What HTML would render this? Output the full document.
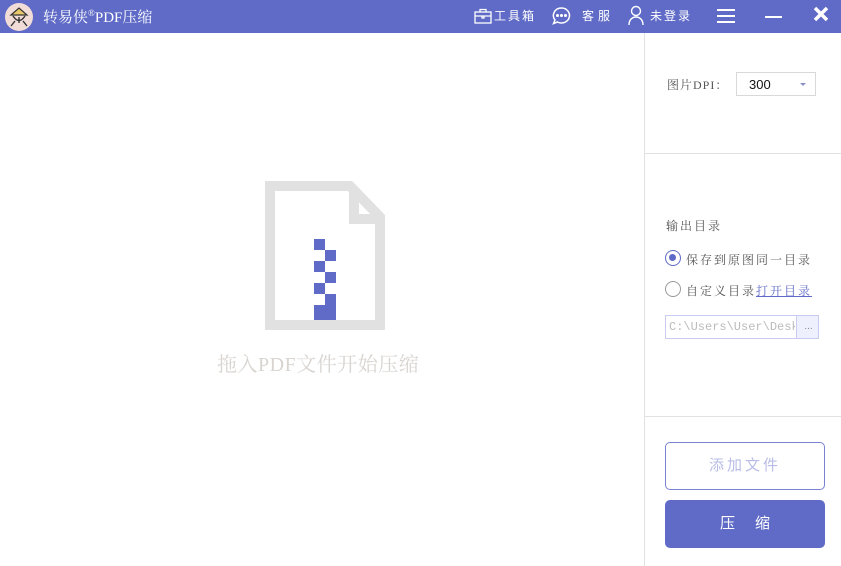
<!DOCTYPE html>
<html><head><meta charset="utf-8"><style>
*{margin:0;padding:0;box-sizing:border-box}
body{width:841px;height:566px;overflow:hidden;background:#fff;font-family:"Liberation Sans","Noto Sans CJK SC",sans-serif;position:relative}
.top{position:absolute;left:0;top:0;width:841px;height:33px;background:#5f6bc6;color:#fff}
.abs{position:absolute}
.t{font-family:"Liberation Serif","Noto Serif CJK SC",serif}
.side{position:absolute;left:644px;top:33px;width:1px;height:533px;background:#e2e2e2}
.hr{position:absolute;left:645px;width:196px;height:1px;background:#e2e2e2}
.lbl{font-size:12px;color:#555;letter-spacing:2px;font-family:"Liberation Serif","Noto Serif CJK SC",serif}
</style></head><body>
<div class="top">
  <div class="abs" style="left:5px;top:3px;width:28px;height:28px;border-radius:50%;background:#f2dcd8;overflow:hidden">
    <svg width="28" height="28" viewBox="0 0 28 28"><path d="M6 12 L14 5 L22 12 Z" fill="#e8c86a" stroke="#333" stroke-width="1.2"/><path d="M8 13 Q14 22 20 13 M10 18 L6 23 M18 18 L22 23 M14 14 L14 20" stroke="#333" stroke-width="1.4" fill="none"/></svg>
  </div>
  <div class="abs t" style="left:43px;top:6px;font-size:15px">转易侠<sup style="font-size:9px">®</sup>PDF压缩</div>
  <svg class="abs" style="left:474px;top:8px" width="18" height="17" viewBox="0 0 18 17" fill="none" stroke="#fff" stroke-width="1.3"><rect x="1" y="4" width="16" height="11"/><path d="M6 4V1.5h6V4M1 8h16M8 8v2h2V8"/></svg>
  <div class="abs" style="left:494px;top:7px;font-size:12px;letter-spacing:2px">工具箱</div>
  <svg class="abs" style="left:551px;top:6px" width="21" height="20" viewBox="0 0 21 20" fill="none" stroke="#fff" stroke-width="1.5"><path d="M10.5 2a8 7.5 0 1 1-4 14l-4 1.5 1.5-3.5A8 7.5 0 0 1 10.5 2z"/><circle cx="6.5" cy="9.5" r=".8" fill="#fff"/><circle cx="10.5" cy="9.5" r=".8" fill="#fff"/><circle cx="14.5" cy="9.5" r=".8" fill="#fff"/></svg>
  <div class="abs" style="left:582px;top:7px;font-size:12px;letter-spacing:4px">客服</div>
  <svg class="abs" style="left:628px;top:5px" width="16" height="20" viewBox="0 0 16 20" fill="none" stroke="#fff" stroke-width="1.4"><circle cx="8" cy="6" r="4.5"/><path d="M1 20c0-5 3-8 7-8s7 3 7 8"/></svg>
  <div class="abs" style="left:650px;top:7px;font-size:12px;letter-spacing:2px">未登录</div>
  <div class="abs" style="left:717px;top:9px;width:18px;height:14px;border-top:2px solid #fff;border-bottom:2px solid #fff"><div style="margin-top:4px;height:2px;background:#fff"></div></div>
  <div class="abs" style="left:765px;top:16px;width:17px;height:2px;background:#fff"></div>
  <svg class="abs" style="left:813px;top:6px" width="16" height="16" viewBox="0 0 16 16" stroke="#fff" stroke-width="3.5"><path d="M2 2L14 14M14 2L2 14"/></svg>
</div>

<svg class="abs" style="left:265px;top:181px" width="120" height="150" viewBox="0 0 120 150">
  <path d="M5 5H85L115 36V144H5Z" fill="none" stroke="#e1e1e1" stroke-width="10"/>
  <path d="M89 10V38H112" fill="none" stroke="#e1e1e1" stroke-width="10"/>
  <g fill="#5f6bc6"><rect x="49" y="58" width="11" height="11"/><rect x="60" y="69" width="11" height="11"/><rect x="49" y="80" width="11" height="11"/><rect x="60" y="91" width="11" height="11"/><rect x="49" y="102" width="11" height="11"/><rect x="60" y="113" width="11" height="11"/><rect x="49" y="124" width="22" height="15"/></g>
</svg>
<div class="abs t" style="left:217px;top:348px;font-size:20px;color:#d8d4d0;letter-spacing:0.5px">拖入PDF文件开始压缩</div>

<div class="side"></div>
<div class="hr" style="top:153px"></div>
<div class="hr" style="top:416px"></div>

<div class="abs lbl" style="left:667px;top:76px;letter-spacing:1px">图片DPI：</div>
<div class="abs" style="left:736px;top:72px;width:80px;height:24px;border:1px solid #d9d9d9;font-size:13px;padding:4px 0 0 12px;color:#111">300<span style="position:absolute;right:9px;top:10px;border:3px solid transparent;border-top:3px solid #8a8fc8"></span></div>

<div class="abs lbl" style="left:666px;top:217px">输出目录</div>
<div class="abs" style="left:665px;top:250px;width:16px;height:16px;border-radius:50%;border:1.5px solid #5f6bc6"><div style="margin:3px;width:7px;height:7px;border-radius:50%;background:#5f6bc6"></div></div>
<div class="abs lbl" style="left:686px;top:251px">保存到原图同一目录</div>
<div class="abs" style="left:665px;top:281px;width:16px;height:16px;border-radius:50%;border:1.5px solid #999"></div>
<div class="abs lbl" style="left:686px;top:282px">自定义目录<span style="color:#5f6bc6;text-decoration:underline;letter-spacing:2px">打开目录</span></div>
<div class="abs" style="left:665px;top:315px;width:154px;height:24px;border:1px solid #c9ccf0;overflow:hidden;white-space:nowrap">
  <div style="position:absolute;left:3px;top:4px;font-family:'Liberation Mono',monospace;font-size:12px;color:#bbb;width:126px;overflow:hidden">C:\Users\User\Desktop</div>
  <div style="position:absolute;left:130px;top:0;width:24px;height:24px;background:#eef0fd;border-left:1px solid #c9ccf0;color:#888;font-size:10px;text-align:center;line-height:22px">...</div>
</div>

<div class="abs" style="left:665px;top:442px;width:160px;height:48px;border:1px solid #7a83d2;border-radius:5px;color:#b8bce6;font-size:15px;text-align:center;line-height:46px;letter-spacing:3px">添加文件</div>
<div class="abs" style="left:665px;top:500px;width:160px;height:48px;border-radius:5px;background:#5f6bc6;color:#fff;font-size:15px;text-align:center;line-height:48px;letter-spacing:20px;padding-left:20px">压缩</div>
</body></html>
